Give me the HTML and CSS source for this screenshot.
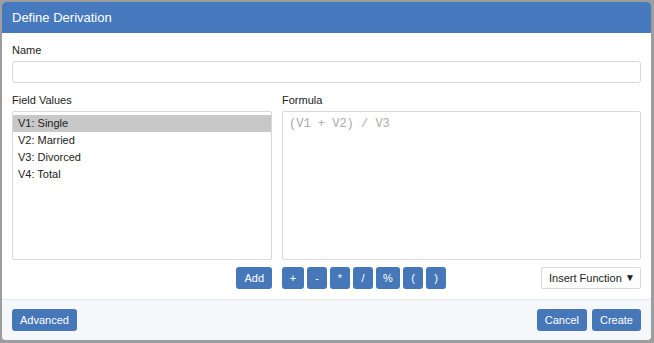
FILE: index.html
```html
<!DOCTYPE html>
<html>

<head>
    <meta charset="UTF-8">
    <title>Define Derivation</title>
    <link rel="stylesheet" href="styles.css">
</head>

<body>
<div class="modal">
    <div class="modal-header">Define Derivation</div>

    <div class="modal-body">
        <label class="lbl">Name</label>
        <input class="name-input" type="text" value="">

        <div class="grid">
            <label class="lbl">Field Values</label>
            <label class="lbl">Formula</label>

            <ul class="field-list">
                <li class="selected">V1: Single</li>
                <li>V2: Married</li>
                <li>V3: Divorced</li>
                <li>V4: Total</li>
            </ul>
            <textarea class="formula" placeholder="(V1 + V2) / V3"></textarea>

            <div class="left-tools">
                <button class="btn">Add</button>
            </div>
            <div class="right-tools">
                <div class="ops">
                    <button class="btn op plus">+</button>
                    <button class="btn op">-</button>
                    <button class="btn op">*</button>
                    <button class="btn op">/</button>
                    <button class="btn op pct">%</button>
                    <button class="btn op">(</button>
                    <button class="btn op">)</button>
                </div>
                <div class="select">Insert Function <span class="caret">&#9660;</span></div>
            </div>
        </div>
    </div>

    <div class="modal-footer">
        <button class="btn">Advanced</button>
        <div class="footer-right">
            <button class="btn">Cancel</button>
            <button class="btn">Create</button>
        </div>
    </div>
</div>
</body>

</html>
```

FILE: styles.css
```css
body {
    margin: 0;
    padding: 2px 0 0 2px;
    background: #9d9d9d;
    font-family: "Liberation Sans", Arial, sans-serif;
    font-size: 11px;
    color: #222;
}

.modal {
    width: 649px;
    height: 338px;
    background: #fff;
    border-radius: 4px;
    display: flex;
    flex-direction: column;
    overflow: hidden;
}

.modal-header {
    height: 31px;
    background: #4679bd;
    color: #fff;
    font-size: 13px;
    line-height: 31px;
    padding-left: 10px;
}

.modal-body {
    padding: 10px;
    display: flex;
    flex-direction: column;
}

.lbl {
    display: block;
    line-height: 14px;
    height: 14px;
    color: #222;
}

.name-input {
    margin: 4px 0 10px 0;
    height: 22px;
    box-sizing: border-box;
    border: 1px solid #d8d8d8;
    border-radius: 3px;
    width: 629px;
}

.grid {
    display: grid;
    grid-template-columns: 260px 1fr;
    column-gap: 10px;
    grid-template-rows: 14px 149px 22px;
    row-gap: 4px;
    padding-bottom: 3px;
}

.field-list {
    margin: 0;
    padding: 3px 0 0 0;
    list-style: none;
    border: 1px solid #d8d8d8;
    border-radius: 2px;
    box-sizing: border-box;
}

.field-list li {
    height: 17px;
    line-height: 17px;
    padding-left: 5px;
}

.field-list .selected {
    background: #c8c8c8;
}

.formula {
    margin: 0;
    box-sizing: border-box;
    border: 1px solid #d8d8d8;
    border-radius: 2px;
    padding: 5px 6px;
    resize: none;
    font-family: "Liberation Mono", "Courier New", monospace;
    font-size: 12px;
}

.formula::placeholder {
    color: #aaa;
}

.left-tools {
    display: flex;
    justify-content: flex-end;
    margin-top: 3px;
}

.right-tools {
    display: flex;
    justify-content: space-between;
    margin-top: 3px;
}

.ops {
    display: flex;
    gap: 3px;
}

.btn {
    height: 22px;
    padding: 0 8px;
    border: none;
    border-radius: 3px;
    background: #4677b8;
    color: #fff;
    font-family: "Liberation Sans", Arial, sans-serif;
    font-size: 11px;
}

.op {
    width: 20px;
    padding: 0;
}

.op.plus {
    width: 22px;
}

.op.pct {
    width: 24px;
}

.select {
    width: 100px;
    height: 22px;
    box-sizing: border-box;
    border: 1px solid #d8d8d8;
    border-radius: 2px;
    padding-left: 7px;
    line-height: 20px;
    display: flex;
    justify-content: space-between;
}

.caret {
    font-size: 10px;
    padding-right: 5px;
    color: #222;
}

.modal-footer {
    flex: 1;
    background: #f5f7fb;
    border-top: 1px solid #e6e9ee;
    display: flex;
    justify-content: space-between;
    align-items: flex-start;
    padding: 9px 10px 0 10px;
}

.footer-right {
    display: flex;
    gap: 5px;
}
```
